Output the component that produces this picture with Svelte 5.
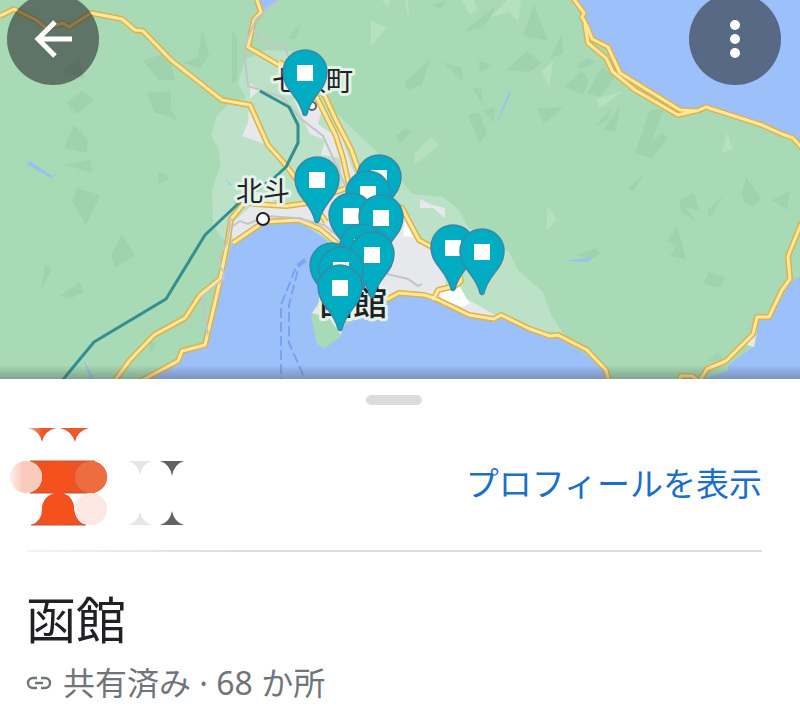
<script lang="ts">
  const listName = '函館';
  const placeCount = 68;

  // drawn in order, later pins overlap earlier ones
  const pins = [
    { x: 305, y: 72 },
    { x: 379, y: 177 },
    { x: 368, y: 193 },
    { x: 317, y: 179 },
    { x: 351, y: 215 },
    { x: 381, y: 217 },
    { x: 362, y: 246 },
    { x: 372, y: 254 },
    { x: 332, y: 265 },
    { x: 341, y: 269 },
    { x: 340, y: 287 },
    { x: 453, y: 247 },
    { x: 482, y: 251 }
  ];

  const darkPatches = [
    '143,60 168,53 175,80 158,80',
    '183,63 198,57 202,30 209,55 200,68',
    '147,93 171,91 171,109 178,120 154,112',
    '66,103 82,91 94,100 77,114',
    '74,125 88,139 87,153 64,148',
    '61,165 90,160 92,172',
    '158,171 170,178 159,184',
    '62,71 79,58 85,79',
    '77,188 100,195 90,204 73,200',
    '72,200 82,190 100,196 86,225',
    '122,234 135,255 115,268 111,255',
    '45,265 52,270 41,290',
    '60,296 80,282 84,292 69,299',
    '232,31 237,36 237,80 232,84',
    '405,82 430,59 422,85 407,90',
    '443,62 462,68 463,82',
    '479,61 492,65 480,73',
    '472,88 481,88 482,103',
    '507,70 527,51 542,63 529,72',
    '464,31 478,20 497,5 487,22 479,29',
    '523,36 534,4 548,41',
    '550,58 562,34 563,54',
    '576,66 587,58 596,62 582,69',
    '564,87 582,71 589,80 583,95',
    '587,93 602,67 615,77 600,97',
    '537,108 563,107 544,124',
    '468,115 479,112 487,134 480,143',
    '483,110 495,107 494,123',
    '595,126 612,107 607,121',
    '603,130 620,106 615,132',
    '635,153 650,110 664,109 651,143 662,133 668,138 652,159',
    '628,188 645,173 633,191',
    '746,177 761,197 750,200 741,195',
    '680,200 694,192 699,210 685,208 698,223 681,211',
    '708,210 724,194 709,219',
    '743,194 755,190 761,200 752,207 743,202',
    '772,200 790,191 787,210',
    '667,240 677,227 681,240 686,259 670,256 676,247',
    '709,272 726,278 718,288 703,283',
    '708,361 718,352 724,361',
    '575,255 597,248 600,254 590,259',
    '395,136 405,129 412,130 400,143',
    '287,38 300,25 295,40',
    '433,5 447,0 440,9',
    '149,342 157,342 150,353'
  ];

  const lightPatches = [
    '371,21 387,27 371,46',
    '382,0 390,0 388,8',
    '405,0 408,0 409,19',
    '462,0 474,0 477,9 470,15',
    '491,17 507,0 521,0 518,21 509,12',
    '542,71 553,61 549,88',
    '596,99 623,91 600,108',
    '414,154 431,137 439,145 415,165',
    '722,153 727,133 733,149',
    '547,206 557,219 547,230'
  ];

  const highways = [
    'M0 16 14 9 36 20 46 28 63 23 69 27 91 13 122 19 135 30 143 31 171 60 222 100 250 105 268 145 284 163 300 184 326 222',
    'M257 0 261 12 254 20 248 47 279 65 305 76 316 96 336 136 343 158 350 190 362 213',
    'M279 62 312 84 325 96 336 120 351 149 361 177 386 205 402 208 419 240 445 254',
    'M233 243 264 222 299 220 320 229 340 246',
    'M235 200 255 204 286 206 308 203 333 193 352 186',
    'M245 202 231 219 227 245 222 270 220 279 200 295 185 318 154 335 130 360 113 383',
    'M220 281 205 345 182 351 178 361 139 382',
    'M386 300 399 293 424 295 434 298 469 315 494 319 501 315 530 329 550 336 558 335 587 350 606 370 609 382',
    'M433 300 438 290 455 286 461 281 460 276',
    'M573 -2 584 13 582 17 587 26 592 39 608 47 620 73 680 110 697 111 706 107 762 125 782 134 793 138 802 148',
    'M585 24 588 43 606 58 613 72 635 90 678 115 695 111',
    'M802 222 788 256 790 279 782 290 769 317 757 317 753 334 726 361 707 369 699 382',
    'M678 382 681 376 692 376 700 382'
  ];
</script>

<main class="page">
  <section class="map-area" aria-label="地図">
    <svg class="map" viewBox="0 0 800 379" role="img" aria-label={listName}>
      <defs>
        <linearGradient id="edge" x1="0" y1="0" x2="0" y2="1">
          <stop offset="0" stop-color="#3c4043" stop-opacity="0" />
          <stop offset="1" stop-color="#3c4043" stop-opacity="0.35" />
        </linearGradient>
      </defs>
      <rect width="800" height="379" class="land" />
      {#each darkPatches as points}
        <polygon {points} class="dark" />
      {/each}
      {#each lightPatches as points}
        <polygon {points} class="light" />
      {/each}

      <!-- lowland and built-up areas -->
      <polygon class="plain" points="238,83 245,60 265,50 290,51 315,72 335,112 357,133 383,158 412,194 443,197 458,209 469,228 509,252 518,270 543,292 551,315 564,335 500,322 380,303 232,241 222,239 213,224 212,190 220,166 219,150 211,135 217,115 229,104 246,98" />
      <polygon class="town" points="250,83 259,90 250,99" />
      <polygon class="town" points="249,107 264,144 242,136 248,123" />
      <polygon class="town" points="294,100 312,101 323,106 318,124 329,132 340,132 352,168 364,190 370,208 343,195 340,158 321,155 325,140 310,134" />
      <polygon class="town" points="230,225 250,207 254,190 280,205 306,205 340,193 372,200 400,207 421,241 442,256 446,287 500,318 470,316 434,299 385,301 342,320 318,304 345,265 330,232 300,221 264,222 233,241" />
      <polygon class="town" points="420,199 430,204 445,208 445,218 433,208 420,208" />
      <polygon class="bright" points="440,292 460,287 469,303 464,307 440,299" />
      <polygon class="bright" points="405,222 413,237 403,236" />

      <!-- sea -->
      <polygon class="sea" points="573,0 587,26 592,39 608,47 620,73 680,109 706,107 762,125 793,138 800,146 800,0" />
      <polygon class="sea" points="260,0 278,0 264,10" />
      <polygon class="sea" points="800,276 790,283 770,319 759,320 755,346 728,365 728,371 702,379 800,379" />
      <polygon class="town" points="757,330 754,347 747,345" />
      <path class="sea" d="M139 379 180 362 183 352 206 347 222 280 232 243 264 224 299 222 320 235 335 247 322 270 320 300 311 314 317 344 325 348 341 336 342 326 360 318 385 302 400 295 424 297 434 300 469 317 494 321 501 317 530 331 550 338 558 338 580 351 592 359 606 374 608 379Z" />
      <polygon class="land" points="311,314 320,312 330,318 338,326 342,335 325,348 317,344" />
      <polygon class="town" points="320,302 312,313 328,317 341,335 342,318 360,312 350,295" />
      <g class="river">
        <polygon points="26,164 30,161 52,176 57,173 51,178" />
        <polygon points="495,126 510,90 510,96" />
        <polygon points="564,261 594,257 588,262" />
        <polygon points="83,358 89,369 94,379 90,379" />
        <polygon points="225,179 232,185 230,185" />
      </g>
      <g class="ferry">
        <path d="M305 259 297 265 281 305V379" />
        <path d="M306 261 299 266 289 305V343L305 379" />
      </g>

      <!-- roads -->
      {#each highways as d}
        <path {d} class="road-case" />
      {/each}
      {#each highways as d}
        <path {d} class="road" />
      {/each}
      <g class="railway">
        <path d="M278 0 256 19 244 48 248 86 282 97 300 118 323 136 338 169 352 202" />
        <path d="M253 29 262 42 285 47 292 66" />
        <path d="M230 228 240 221 248 224 265 216 297 218 324 225 345 242" />
        <path d="M231 218 227 243 220 255 220 267 224 272 223 279 202 297 208 335" />
        <path d="M387 274 408 279 418 286 422 284" />
      </g>
      <path class="express" d="M260 91 289 107 298 125 298 143 286 167 274 178 241 201 205 235 166 299 94 342 61 382" />

      <g class="label">
        <text x="272" y="91" class="small">七飯町</text>
        <text x="236" y="201" class="small">北斗</text>
        <text x="319" y="315" class="city">函館</text>
      </g>
      <circle cx="312" cy="106" r="4" class="station" />
      <circle cx="263" cy="219" r="6" class="town-dot" />

      {#each pins as pin}
        <g transform="translate({pin.x} {pin.y})">
          <path class="pin" d="M0 -22A22 22 0 0 1 22 0C22 18 6 23 2 42Q0 45 -2 42C-6 23 -22 18 -22 0A22 22 0 0 1 0 -22Z" />
          <rect x="-8" y="-7" width="16" height="16" fill="#fff" />
        </g>
      {/each}
      <rect y="365" width="800" height="14" fill="url(#edge)" />
    </svg>

    <button class="round back" aria-label="戻る">
      <svg viewBox="0 0 92 92" aria-hidden="true">
        <path d="M65 46H32M48 29 31 46 48 63" fill="none" stroke="#fff" stroke-width="5" />
      </svg>
    </button>
    <button class="round more" aria-label="その他">
      <svg viewBox="0 0 92 92" fill="#fff" aria-hidden="true">
        <circle cx="46" cy="32" r="5" />
        <circle cx="46" cy="46" r="5" />
        <circle cx="46" cy="60" r="5" />
      </svg>
    </button>
  </section>

  <section class="sheet">
    <div class="handle"></div>
    <div class="owner">
      <svg class="avatar" viewBox="0 0 190 104" aria-hidden="true">
        <defs>
          <linearGradient id="fade">
            <stop offset="0" stop-color="#f9cbbd" stop-opacity="0.3" />
            <stop offset="0.4" stop-color="#f9cbbd" />
          </linearGradient>
          <linearGradient id="tip">
            <stop offset="0" stop-color="#f4511e" stop-opacity="0.4" />
            <stop offset="0.5" stop-color="#e9592c" />
          </linearGradient>
        </defs>
        <path d="M28 4H56Q44 7 42 18Q40 7 28 4Z" fill="url(#tip)" />
        <path d="M60 4H89Q77 7 75 18Q72 7 60 4Z" fill="#e9592c" />
        <path d="M30 37H91A16 16 0 0 1 91 69H63Q74 73 74 85Q76 98 86 101H31Q42 97 42 85Q43 72 55 69H30Z" fill="#ed5325" />
        <path d="M30 37H95M30 69H55M63 69H95M31 101H86" stroke="#bd5536" />
        <circle cx="58" cy="53" r="16" fill="#f4511e" />
        <circle cx="58" cy="85" r="16" fill="#f4511e" />
        <circle cx="91" cy="53" r="16" fill="#ee6d40" />
        <circle cx="26" cy="53" r="16" fill="#fff" />
        <circle cx="26" cy="53" r="16" fill="url(#fade)" />
        <circle cx="91" cy="85" r="16" fill="#fbe8e2" />
        <g fill="#e6e6e6">
          <path d="M128 37H152Q142 40 140 51Q138 40 128 37Z" />
          <path d="M128 101H152Q142 98 140 88Q138 98 128 101Z" />
        </g>
        <g fill="#606264">
          <path d="M160 37H184Q174 40 172 52Q170 40 160 37Z" />
          <path d="M160 101H184Q174 98 172 87Q170 98 160 101Z" />
        </g>
      </svg>
      <a class="profile" href="#profile">プロフィールを表示</a>
    </div>
    <div class="divider"></div>
    <h1>{listName}</h1>
    <p class="meta">
      <svg class="link-icon" viewBox="0 0 26 14" aria-hidden="true">
        <path d="M11 2H7A5 5 0 0 0 7 12H11M15 2H19A5 5 0 0 1 19 12H15M9 7H17" fill="none" stroke="#70757a" stroke-width="2.4" />
      </svg>
      <span>共有済み · {placeCount} か所</span>
    </p>
  </section>
</main>

<style>
  :global(body) {
    background: #fff;
  }

  .page {
    font-family: 'Noto Sans CJK JP', sans-serif;
    color: #202124;
  }

  .map-area {
    position: relative;
    overflow: hidden;
  }

  .map {
    display: block;
    width: 100%;
  }

  .land { fill: #a8dab5; }
  .dark { fill: #a0d2ae; }
  .light { fill: #b6e1c0; }
  .plain { fill: #bbe2c7; }
  .town { fill: #e6e8eb; }
  .bright { fill: #fff; }
  .sea { fill: #9cc0fa; }
  .river { fill: #9cc0ec; }

  .ferry {
    fill: none;
    stroke: #77a4ee;
    stroke-width: 2;
    stroke-dasharray: 10 4;
  }

  .road-case, .road, .express {
    fill: none;
    stroke-linejoin: round;
  }

  .road-case {
    stroke: #ddb24a;
    stroke-width: 6;
  }

  .road {
    stroke: #ffe89b;
    stroke-width: 3;
  }

  .railway {
    fill: none;
    stroke: #c3c5c7;
    stroke-width: 2;
  }

  .express {
    stroke: #31908f;
    stroke-width: 3;
  }

  .label {
    fill: #202124;
    stroke: #e4f3e8;
    stroke-width: 6;
    stroke-linejoin: round;
    paint-order: stroke;
  }

  .small { font-size: 27px; }

  .city {
    font-size: 34px;
    font-weight: 500;
  }

  .station {
    fill: #fff;
    stroke: #5f6368;
    stroke-width: 2;
  }

  .town-dot {
    fill: #fff;
    stroke: #202124;
    stroke-width: 2;
  }

  .pin {
    fill: #00acc1;
    stroke: #3b87a6;
    stroke-width: 1.5;
  }

  .round {
    position: absolute;
    top: -7px;
    width: 92px;
    height: 92px;
    padding: 0;
    border: 0;
    border-radius: 50%;
    background: rgba(32, 33, 36, 0.55);
    cursor: pointer;
  }

  .round svg {
    display: block;
  }

  .back { left: 7px; }
  .more { right: 19px; }

  .sheet {
    padding: 16px 38px 16px 26px;
  }

  .handle {
    width: 56px;
    height: 10px;
    margin: 0 auto;
    border-radius: 5px;
    background: #dadce0;
  }

  .owner {
    display: flex;
    align-items: flex-end;
    justify-content: space-between;
    margin-top: 19px;
    margin-left: -26px;
  }

  .avatar {
    width: 190px;
    height: 104px;
  }

  .profile {
    padding-bottom: 22px;
    font-size: 33px;
    line-height: 48px;
    color: #1a6fc9;
    text-decoration: none;
    white-space: nowrap;
  }

  .divider {
    height: 2px;
    margin-top: 22px;
    background: linear-gradient(to right, #f4f4f4, #dadcdd 30%);
  }

  h1 {
    margin: 29px 0 0;
    font-size: 50px;
    font-weight: 400;
    line-height: 72px;
  }

  .meta {
    display: flex;
    align-items: center;
    gap: 11px;
    margin: 6px 0 0;
    font-family: 'Noto Sans', 'Noto Sans CJK JP', sans-serif;
    font-size: 32px;
    line-height: 48px;
    color: #70757a;
  }

  .link-icon {
    width: 26px;
    height: 14px;
  }
</style>
